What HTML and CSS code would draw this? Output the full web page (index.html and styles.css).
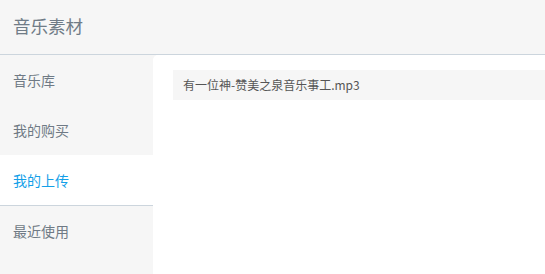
FILE: index.html
```html
<!DOCTYPE html>
<html lang="zh-CN">
<head>
    <meta charset="UTF-8">
    <meta name="viewport" content="width=device-width, initial-scale=1.0">
    <title>音乐素材</title>
    <link rel="stylesheet" href="styles.css">
</head>
<body>
    <div class="header">音乐素材</div>
    <div class="layout">
        <ul class="side-nav">
            <li class="nav-item">音乐库</li>
            <li class="nav-item">我的购买</li>
            <li class="nav-item active">我的上传</li>
            <li class="nav-item">最近使用</li>
        </ul>
        <div class="main">
            <div class="file-row">有一位神-赞美之泉音乐事工.mp3</div>
        </div>
    </div>
</body>
</html>
```

FILE: styles.css
```css
body {
margin: 0;
font-family: "Noto Sans CJK SC", "Microsoft YaHei", sans-serif;
background: #f6f6f6;
height: 274px;
overflow: hidden;
}

.header {
height: 54px;
line-height: 52px;
padding-left: 13px;
font-size: 17.5px;
color: #707c87;
background: #f6f6f6;
border-bottom: 1px solid #ccd5dd;
}

.layout {
display: flex;
height: 219px;
}

.side-nav {
list-style: none;
margin: 0;
padding: 0;
width: 153px;
flex-shrink: 0;
}

.nav-item {
height: 50px;
line-height: 50px;
padding-left: 13px;
font-size: 14px;
color: #6f7a85;
}

.nav-item.active {
background: #fff;
color: #14a0e8;
border-bottom: 1px solid #ccd5dd;
}

.main {
flex: 1;
background: #fff;
border-top-left-radius: 5px;
padding: 15px 0 0 20px;
}

.file-row {
height: 30px;
line-height: 30px;
padding-left: 10px;
font-size: 12px;
color: #555;
background: #f6f6f6;
}
```
